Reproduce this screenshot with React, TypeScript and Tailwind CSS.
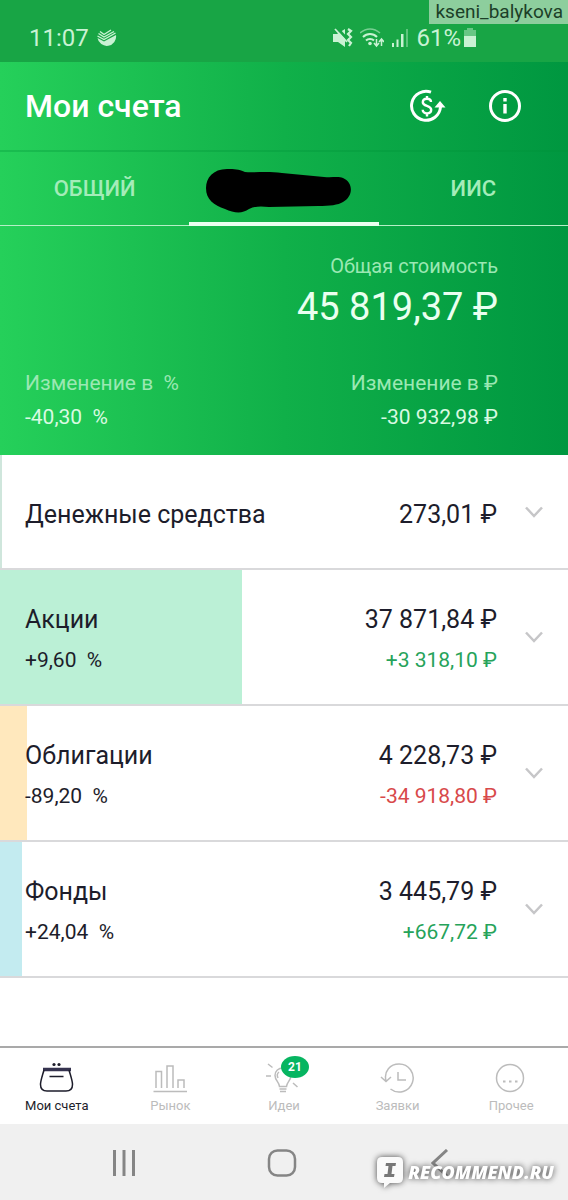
import type React from "react";

type Holding = {
  name: string;
  value: string;
  percent?: string;
  change?: string;
  changeColor?: string;
  share: number;
  fill: string;
};

const holdings: Holding[] = [
  { name: "Денежные средства", value: "273,01 ₽", share: 0.4, fill: "bg-[#cfe6dc]" },
  {
    name: "Акции",
    value: "37 871,84 ₽",
    percent: "+9,60",
    change: "+3 318,10 ₽",
    changeColor: "text-[#26a35a]",
    share: 42.6,
    fill: "bg-[#bbf0d6]",
  },
  {
    name: "Облигации",
    value: "4 228,73 ₽",
    percent: "-89,20",
    change: "-34 918,80 ₽",
    changeColor: "text-[#d8494a]",
    share: 4.7,
    fill: "bg-[#ffe8bd]",
  },
  {
    name: "Фонды",
    value: "3 445,79 ₽",
    percent: "+24,04",
    change: "+667,72 ₽",
    changeColor: "text-[#26a35a]",
    share: 3.9,
    fill: "bg-[#c3ebf0]",
  },
];

const LeafIcon = () => (
  <svg viewBox="0 0 20 20" className="w-5 h-5 text-[#c9f2d3]" fill="none" stroke="currentColor" aria-hidden="true">
    <path d="M.5 10l6.500 3.500L19 7a9.200 9.200 0 1 1-18.500 3z" fill="currentColor" stroke="none" />
    <path d="M.5 8l6.500 3.500L18.500 5M1.500 5.500L7 9l10-5.500M3 3.500L7 6.500l7-4.500" strokeWidth={1.400} />
  </svg>
);

const MuteIcon = () => (
  <svg viewBox="0 0 20 20" className="w-5 h-5" fill="none" stroke="currentColor" aria-hidden="true">
    <path d="M0 6h4l8-5v18l-7-5H0z" fill="currentColor" stroke="none" />
    <path d="M4 0l10 11" stroke="#18a545" strokeWidth={3} />
    <path d="M2 1l12 13" strokeWidth={1.800} />
    <path d="M15 1l3 2-3 3 3 3-3 3 3 3-2 3" strokeWidth={2.200} />
  </svg>
);

const WifiIcon = () => (
  <svg viewBox="0 0 24 20" className="w-6 h-5" fill="none" stroke="currentColor" aria-hidden="true">
    <path d="M0 5c6-5.500 14-5.500 20 0" strokeWidth={1.500} opacity={0.55} />
    <path d="M3 9c4-4 10-4 14 0M6 12.500c2-2 6-2 8 0" strokeWidth={2} />
    <circle cx="10" cy="15.500" r="1.800" fill="currentColor" stroke="none" />
    <path d="M16.500 11v7M14 15l2.500 3 2.500-3M21.500 18v-7M19 14l2.500-3 2.500 3" strokeWidth={1.500} />
  </svg>
);

const SignalIcon = () => (
  <svg viewBox="0 0 18 20" className="w-[18px] h-5" fill="currentColor" aria-hidden="true">
    <path d="M1 15h2v4H1zM5.500 11.500h2V19h-2zM10 6h2.500v13H10z" />
    <path d="M15 1h2v18h-2z" opacity={0.4} />
  </svg>
);

const BatteryIcon = () => (
  <svg viewBox="0 0 14 20" className="w-3.5 h-5" fill="currentColor" aria-hidden="true">
    <path d="M4 0h6v2h3v6H1V2h3z" opacity={0.45} />
    <path d="M1 8h12v11H1z" />
  </svg>
);

const DollarIcon = () => (
  <svg viewBox="0 0 36 34" className="w-9 h-[34px]" fill="none" stroke="currentColor" aria-hidden="true">
    <path d="M21 3.200A14.500 14.500 0 1 0 30.500 18" strokeWidth={3} />
    <path d="M24.500 18.500h11L30 12z" fill="currentColor" stroke="none" />
    <path
      d="M21 13c0-2-1.500-3.300-4-3.300s-4.200 1.400-4.200 3.500c0 4.600 8.400 2.800 8.400 7.600 0 2.200-1.700 3.600-4.200 3.600s-4.300-1.400-4.300-3.600M17 7v3M17 24v3.500"
      strokeWidth={2.400}
    />
  </svg>
);

const InfoIcon = () => (
  <svg viewBox="0 0 34 34" className="w-[34px] h-[34px]" fill="none" stroke="currentColor" aria-hidden="true">
    <circle cx="17" cy="17" r="14.500" strokeWidth={3} />
    <path d="M17 9v3.500M17 15v9.500" strokeWidth={3.400} />
  </svg>
);

const Chevron = () => (
  <svg viewBox="0 0 18 12" className="w-[18px] h-3 text-[#c6c6c8]" fill="none" stroke="currentColor" aria-hidden="true">
    <path d="M1 1.500l8 8.500 8-8.500" strokeWidth={2.500} />
  </svg>
);

const PurseIcon = () => (
  <svg viewBox="0 0 36 32" className="w-9 h-8" fill="none" stroke="currentColor" strokeWidth={1.500} aria-hidden="true">
    <circle cx="15" cy="2.500" r="1.600" fill="currentColor" stroke="none" />
    <circle cx="20" cy="2.500" r="1.600" fill="currentColor" stroke="none" />
    <path d="M4 7.500h28" stroke="#35334f" strokeWidth={3.500} />
    <path d="M5 8C3 15 1.500 19 1.500 22.500c0 4 2.500 6.500 6.500 6.500h19c4 0 6.500-2.500 6.500-6.500C33.500 19 32 15 30 8M10.500 14.500h14" />
  </svg>
);

const MarketIcon = () => (
  <svg viewBox="0 0 36 32" className="w-9 h-8" fill="none" stroke="currentColor" strokeWidth={1.500} aria-hidden="true">
    <path d="M4 26V9.500h5.500V26M15 26V4h6v22M26 26v-8h6v8M1.500 29.500H35" />
  </svg>
);

const IdeasIcon = () => (
  <svg viewBox="0 0 36 32" className="w-9 h-8" fill="none" stroke="currentColor" strokeWidth={1.500} aria-hidden="true">
    <path d="M13.500 24.500c0-4-4.500-6-4.500-11 0-4.500 3.500-7.500 8-7.500s8 3 8 7.500c0 5-4.500 7-4.500 11zM13.500 27h7M14 29.500h6" />
    <path d="M13 10c-2 1.500-2 4-1 6M2 2l4.500 3.500M0 14h5M27 21l4.500 4" />
  </svg>
);

const OrdersIcon = () => (
  <svg viewBox="0 0 36 32" className="w-9 h-8" fill="none" stroke="currentColor" strokeWidth={1.500} aria-hidden="true">
    <path d="M6 19C3.500 9 10.500 2 19 2a14 14 0 1 1-8.500 25M1 15l5 4.500 5-4.500M18 10v8h8" />
  </svg>
);

const MoreIcon = () => (
  <svg viewBox="0 0 36 32" className="w-9 h-8" fill="none" stroke="currentColor" strokeWidth={1.500} aria-hidden="true">
    <circle cx="17" cy="16" r="13.500" />
    <path d="M10 19.500h2.500M16 19.500h2.500M22 19.500h2.500" strokeWidth={2.200} />
  </svg>
);

const navItems: { label: string; icon: React.ReactNode; active?: boolean; badge?: number }[] = [
  { label: "Мои счета", icon: <PurseIcon />, active: true },
  { label: "Рынок", icon: <MarketIcon /> },
  { label: "Идеи", icon: <IdeasIcon />, badge: 21 },
  { label: "Заявки", icon: <OrdersIcon /> },
  { label: "Прочее", icon: <MoreIcon /> },
];

const Header = () => (
  <header className="bg-linear-to-r from-[#25d05a] via-[#10b049] to-[#009740] text-white">
    <div className="h-[62px] bg-[#18a545] flex items-end justify-between pl-[29px] pr-[91px] pb-3 text-[#c9f2d3]">
      <div className="flex items-center gap-2 text-2xl leading-6">
        <span>11:07</span>
        <LeafIcon />
      </div>
      <div className="flex items-center gap-[7px]">
        <MuteIcon />
        <WifiIcon />
        <SignalIcon />
        <span className="flex items-center gap-0.5 text-2xl leading-6">
          <span>61%</span>
          <BatteryIcon />
        </span>
      </div>
    </div>

    <div className="h-[90px] flex items-center justify-between pl-[25px] pr-[46px] border-b-2 border-[#009338]/30">
      <h1 className="text-[32px] leading-10 font-medium">Мои счета</h1>
      <div className="flex items-center gap-[42px]">
        <button type="button" aria-label="Пополнить">
          <DollarIcon />
        </button>
        <button type="button" aria-label="Информация">
          <InfoIcon />
        </button>
      </div>
    </div>

    <div role="tablist" className="h-[74px] grid grid-cols-3 text-[22px] font-medium text-[#a4ecb9]">
      <button type="button" role="tab" aria-selected="false" className="border-b border-[#b5efc6]">
        ОБЩИЙ
      </button>
      <button
        type="button"
        role="tab"
        aria-selected="true"
        aria-label="Счёт"
        className="flex items-center justify-center border-b-4 border-[#eafff0] pt-2 pr-3"
      >
        <svg viewBox="0 0 148 46" className="w-[148px] h-[46px]" aria-hidden="true">
          <path d="M23 1C9 1 2 10 2 20c0 12 8 17 19 21 9 4 17 5 24 0 6-3 12-3 20-2l49-1c12 0 20-1 25-4 11-6 10-20 0-24-5-2-11 0-19-1L78 5C63 3 49 5 41 4 34 1 31 1 23 1z" />
        </svg>
      </button>
      <button type="button" role="tab" aria-selected="false" className="border-b border-[#b5efc6]">
        ИИС
      </button>
    </div>

    <div className="h-[229px] pl-[25px] pr-[70px] pt-[26px]">
      <div className="text-right">
        <p className="text-xl leading-7 text-[#9be8b3]">Общая стоимость</p>
        <p className="text-[38px] leading-[54px] text-[#eafff0]">45 819,37 ₽</p>
      </div>
      <div className="flex justify-between pt-8 text-[21px] leading-[34px] text-[#d9fae2]">
        <div>
          <p className="text-[#9be8b3] whitespace-pre">Изменение в  %</p>
          <p className="whitespace-pre">-40,30  %</p>
        </div>
        <div className="text-right">
          <p className="text-[#9be8b3]">Изменение в ₽</p>
          <p>-30 932,98 ₽</p>
        </div>
      </div>
    </div>
  </header>
);

const HoldingRow: React.FC<{ item: Holding }> = ({ item }) => (
  <li className="relative border-b-2 border-[#d9d9db]">
    <div className={"absolute inset-y-0 left-0 " + item.fill} style={{ width: `${item.share}%` }} />
    <button
      type="button"
      className={
        "relative w-full flex items-center px-[25px] text-left text-[#1d1d2b] " +
        (item.percent ? "h-[134px]" : "h-[113px]")
      }
    >
      <span className="flex-1 flex flex-col gap-1 pt-1.5">
        <span className="text-[25px] leading-9">{item.name}</span>
        {item.percent && <span className="text-[21px] leading-9 whitespace-pre">{item.percent + "  %"}</span>}
      </span>
      <span className="flex flex-col gap-1 pt-1.5 text-right pr-7">
        <span className="text-[25px] leading-9">{item.value}</span>
        {item.change && <span className={"text-[21px] leading-9 " + item.changeColor}>{item.change}</span>}
      </span>
      <Chevron />
    </button>
  </li>
);

const BottomNav = () => (
  <nav className="h-[78px] grid grid-cols-5 border-t-2 border-[#a9a9a9] bg-white">
    {navItems.map((item) => (
      <a
        key={item.label}
        href="#"
        className={
          "flex flex-col items-center pt-3.5 gap-0.5 text-[13px] leading-5 " +
          (item.active ? "text-[#1d1d2b]" : "text-[#bcbcbc]")
        }
      >
        <span className="relative">
          {item.icon}
          {item.badge && (
            <span className="absolute -top-1.5 left-[15px] w-7 h-[22px] rounded-[50%] bg-[#07b561] text-white text-xs leading-[22px] font-bold text-center">
              {item.badge}
            </span>
          )}
        </span>
        <span>{item.label}</span>
      </a>
    ))}
  </nav>
);

const SystemBar = () => (
  <div className="relative h-[76px] grid grid-cols-3 items-center pl-[45px] pr-[49px] pt-0.5 bg-[#f0f0f0] text-[#858585]">
    <button type="button" aria-label="Недавние" className="justify-self-center">
      <svg viewBox="0 0 24 28" className="w-6 h-7" fill="currentColor" aria-hidden="true">
        <path d="M1 1h3v26H1zM10.500 1h3v26h-3zM20 1h3v26h-3z" />
      </svg>
    </button>
    <button type="button" aria-label="Домой" className="justify-self-center">
      <svg viewBox="0 0 30 28" className="w-[30px] h-7" fill="none" stroke="currentColor" strokeWidth={2.500} aria-hidden="true">
        <rect x="2" y="1.500" width="26" height="25" rx="8.500" />
      </svg>
    </button>
    <button type="button" aria-label="Назад" className="justify-self-center">
      <svg viewBox="0 0 18 28" className="w-[18px] h-7" fill="none" stroke="currentColor" strokeWidth={3} aria-hidden="true">
        <path d="M16 1L2 14l14 13" />
      </svg>
    </button>

    <div className="absolute right-[14px] bottom-3 flex items-center gap-1 text-white drop-shadow-[0_0_3px_#444444]">
      <svg viewBox="0 0 28 32" className="w-7 h-8" aria-hidden="true">
        <path d="M6 1h16q5 0 5 5v16q0 5-5 5h-8l-6 5v-5H6q-5 0-5-5V6q0-5 5-5z" fill="#fafafa" />
        <path d="M10 7h10l-.5 3h-3l-1 8h3l-.5 3H8l.5-3h3l1-8h-3z" fill="#777" />
      </svg>
      <span className="font-['Open_Sans',sans-serif] text-lg leading-8 font-extrabold italic">RECOMMEND.RU</span>
    </div>
  </div>
);

export default function App() {
  return (
    <div className="relative min-h-screen flex flex-col bg-white font-[Roboto,sans-serif]">
      <span className="absolute top-0 right-0 h-6 pl-1.5 pr-[5px] bg-[#8dce9d] text-[#1c3f28] text-[19px] leading-6">
        kseni_balykova
      </span>
      <Header />
      <main className="flex-1">
        <ul>
          {holdings.map((item) => (
            <HoldingRow key={item.name} item={item} />
          ))}
        </ul>
      </main>
      <BottomNav />
      <SystemBar />
    </div>
  );
}
